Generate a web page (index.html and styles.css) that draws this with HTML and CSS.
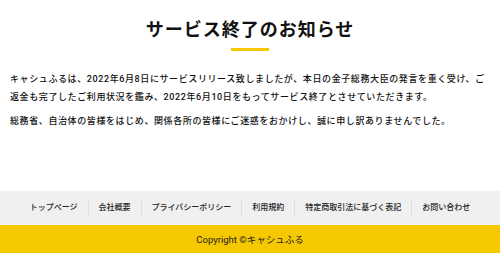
FILE: index.html
```html
<!DOCTYPE html>
<html lang="ja">
<head>
<meta charset="utf-8">
<link rel="stylesheet" href="styles.css">
</head>
<body>
<main class="notice">
  <h1 class="notice-title">サービス終了のお知らせ</h1>
  <div class="notice-bar"></div>
  <p class="notice-text">キャシュふるは、2022年6月8日にサービスリリース致しましたが、本日の金子総務大臣の発言を重く受け、ご返金も完了したご利用状況を鑑み、2022年6月10日をもってサービス終了とさせていただきます。</p>
  <p class="notice-text">総務省、自治体の皆様をはじめ、関係各所の皆様にご迷惑をおかけし、誠に申し訳ありませんでした。</p>
</main>
<footer class="footer">
  <nav class="footer-nav">
    <a class="footer-link">トップページ</a>
    <a class="footer-link">会社概要</a>
    <a class="footer-link">プライバシーポリシー</a>
    <a class="footer-link">利用規約</a>
    <a class="footer-link">特定商取引法に基づく表記</a>
    <a class="footer-link">お問い合わせ</a>
  </nav>
  <div class="footer-copy">Copyright ©キャシュふる</div>
</footer>
</body>
</html>
```
FILE: styles.css
```css
* { box-sizing: border-box; }
html, body { margin: 0; padding: 0; background: #fff; }
body {
  font-family: Roboto, "Noto Sans CJK JP", sans-serif;
  color: #111;
}
.notice {
  padding: 16px 10px 61px;
}
.notice-title {
  margin: 0;
  text-align: center;
  font-size: 18px;
  line-height: 28px;
  font-weight: 700;
  letter-spacing: 1px;
  color: #111;
}
.notice-bar {
  width: 38px;
  height: 3px;
  background: #f5c800;
  margin: 4px auto 19px;
}
.notice-text {
  margin: 0 0 6px;
  font-size: 9px;
  line-height: 18px;
  letter-spacing: 0.6px;
  font-weight: 500;
  color: #111;
}
.notice-text:last-child { margin-bottom: 0; }
.footer-nav {
  background: #f0f0f0;
  height: 34px;
  display: flex;
  justify-content: center;
  align-items: center;
}
.footer-link {
  font-size: 8px;
  font-weight: 500;
  color: #222;
  padding: 0 10px;
  border-left: 1px solid #dcdcdc;
  line-height: 14px;
}
.footer-link:first-child { border-left: none; }
.footer-copy {
  background: #f5c800;
  height: 28px;
  display: flex;
  justify-content: center;
  align-items: center;
  font-size: 9.5px;
  font-weight: 400;
  color: #222;
}
```
